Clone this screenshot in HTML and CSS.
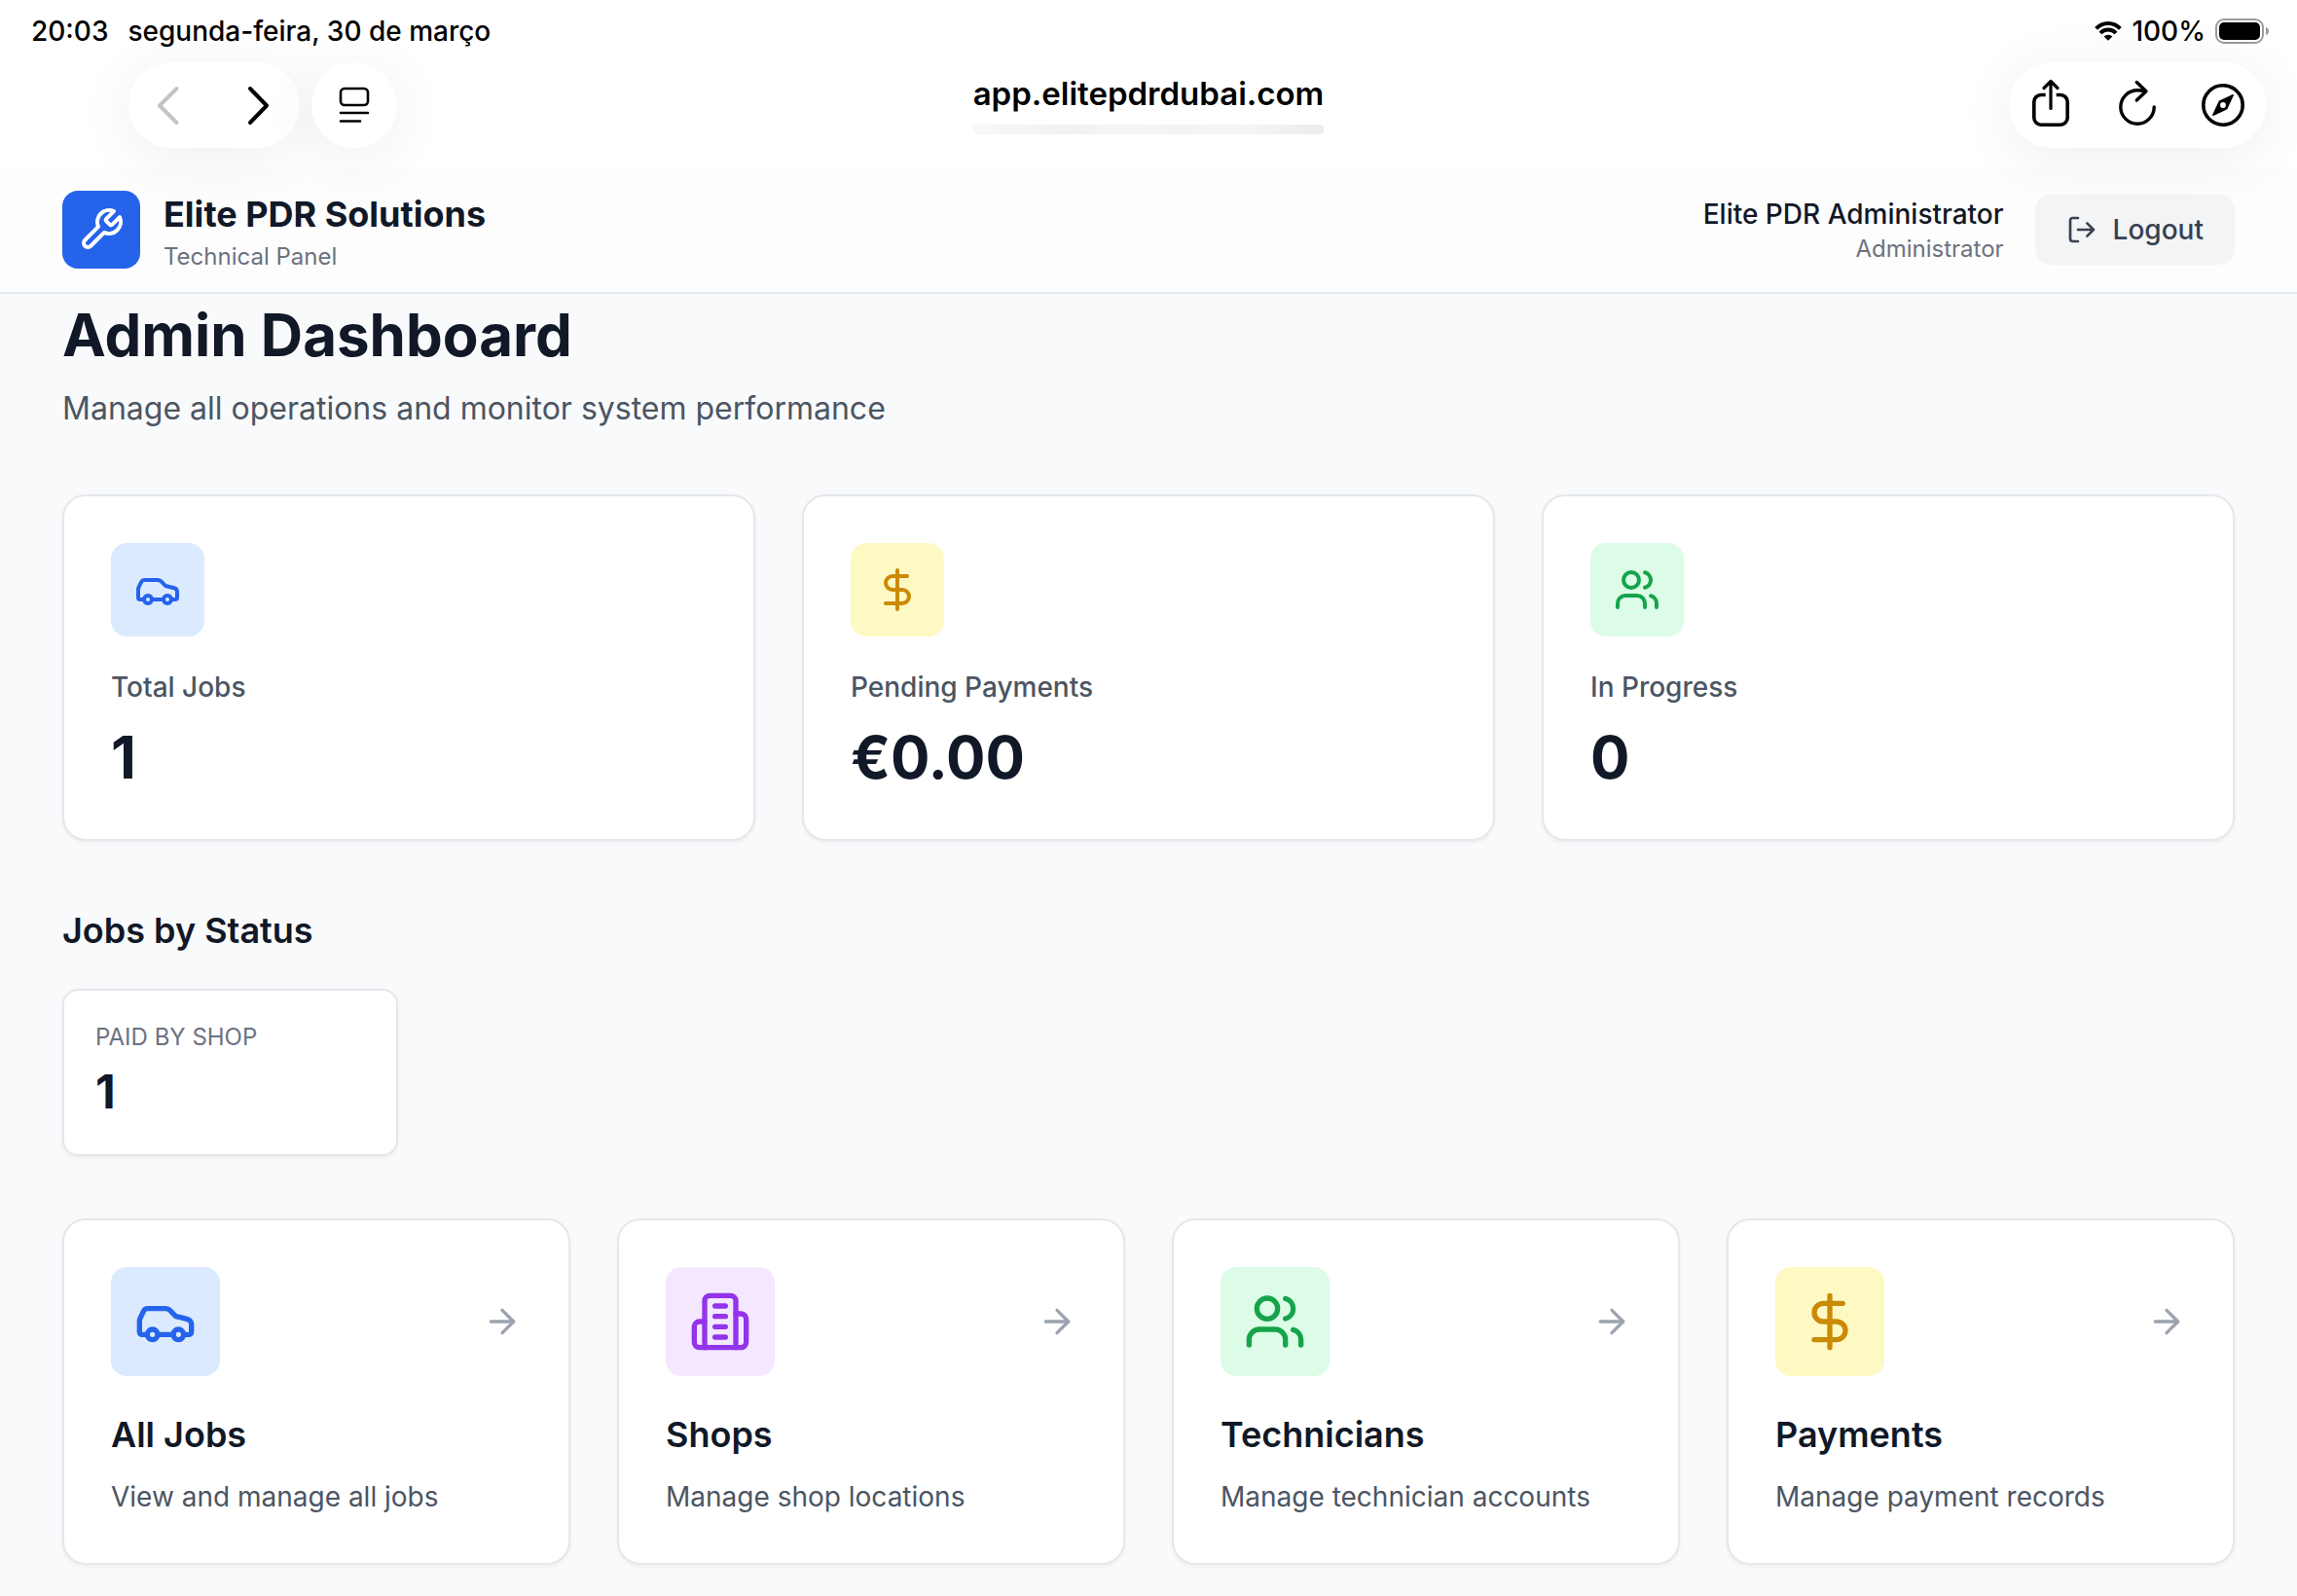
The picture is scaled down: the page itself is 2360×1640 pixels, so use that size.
FILE: index.html
```html
<!DOCTYPE html>
<html lang="en">
    <head>
        <meta charset="UTF-8">
        <meta name="viewport" content="width=device-width, initial-scale=1.0">
        <title>Elite PDR Solutions</title>
        <link rel="stylesheet" href="styles.css">
    </head>
    <body>
        <!-- Icons used more than once -->
        <svg class="sprite" aria-hidden="true">
            <symbol id="car" viewBox="0 0 24 24">
                <path d="M19 17h2c.6 0 1-.4 1-1v-3c0-.9-.7-1.7-1.5-1.9C18.7 10.6 16 10 16 10s-1.3-1.4-2.2-2.3c-.5-.4-1.1-.7-1.8-.7H5c-.6 0-1.1.4-1.4.9l-1.4 2.9A3.7 3.7 0 0 0 2 12v4c0 .6.4 1 1 1h2"/>
                <circle cx="7" cy="17" r="2"/>
                <path d="M9 17h6"/>
                <circle cx="17" cy="17" r="2"/>
            </symbol>
            <symbol id="dollar" viewBox="0 0 24 24">
                <path d="M12 2v20"/>
                <path d="M17 5H9.5a3.5 3.5 0 0 0 0 7h5a3.5 3.5 0 0 1 0 7H6"/>
            </symbol>
            <symbol id="users" viewBox="0 0 24 24">
                <path d="M16 21v-2a4 4 0 0 0-4-4H6a4 4 0 0 0-4 4v2"/>
                <circle cx="9" cy="7" r="4"/>
                <path d="M22 21v-2a4 4 0 0 0-3-3.87"/>
                <path d="M16 3.13a4 4 0 0 1 0 7.75"/>
            </symbol>
            <symbol id="arrow" viewBox="0 0 24 24">
                <path d="M5 12h14"/>
                <path d="m12 5 7 7-7 7"/>
            </symbol>
        </svg>

        <div class="browser">
            <div class="statusbar">
                <div class="status-group status-left">
                    <span>20:03</span>
                    <span lang="pt">segunda-feira, 30 de março</span>
                </div>
                <div class="status-group status-right">
                    <svg class="wifi" viewBox="0 0 28 20" aria-hidden="true">
                        <path class="wave" d="M1.6 7.4A17 17 0 0 1 26.4 7.4"/>
                        <path class="wave" d="M6 12A11 11 0 0 1 22 12"/>
                        <path d="M14 19.8l-4.4-4.3a6.2 6.2 0 0 1 8.8 0z"/>
                    </svg>
                    <span>100%</span>
                    <svg class="battery" viewBox="0 0 56 26" aria-hidden="true">
                        <rect x="1" y="1" width="48" height="24" rx="8" fill="none" stroke="#9c9c9c" stroke-width="2"/>
                        <rect x="4" y="4" width="42" height="18" rx="5"/>
                        <path d="M52 9c2 .6 3 2 3 4s-1 3.4-3 4z" fill="#9c9c9c"/>
                    </svg>
                </div>
            </div>
            <div class="toolbar">
                <div class="tools">
                    <div class="pill">
                        <button class="tool" aria-label="Back" disabled>
                            <svg viewBox="0 0 88 88"><path d="M49.5 27 32 44.5 49.5 62" stroke-width="4"/></svg>
                        </button>
                        <button class="tool" aria-label="Forward">
                            <svg viewBox="0 0 88 88"><path d="M37 27 54 44.5 37 62" stroke-width="4"/></svg>
                        </button>
                    </div>
                    <div class="pill">
                        <button class="tool" aria-label="Page menu">
                            <svg viewBox="0 0 88 88" stroke-width="2.6">
                                <rect x="30" y="27" width="28" height="17" rx="4"/>
                                <path d="M30 52h28M30 60.5h20"/>
                            </svg>
                        </button>
                    </div>
                </div>
                <button class="address">app.elitepdrdubai.com</button>
                <div class="tools tools-right">
                    <div class="pill">
                        <button class="tool" aria-label="Share">
                            <svg viewBox="0 0 88 88" stroke-width="3.6">
                                <path stroke-linecap="butt" d="M37.7 33.5H33a7.2 7.2 0 0 0-7.2 7.2V57a7.2 7.2 0 0 0 7.2 7.2h20a7.2 7.2 0 0 0 7.2-7.2V40.7a7.2 7.2 0 0 0-7.2-7.2h-4.3"/>
                                <path d="M43 20v27.5M36 26.5l7-7 7 7" stroke-width="3.2"/>
                            </svg>
                        </button>
                        <button class="tool" aria-label="Reload">
                            <svg viewBox="0 0 88 88" stroke-width="3.4">
                                <path d="M61.2 46A17.2 17.2 0 1 1 44 28.8Q48 28.8 52 29.7"/>
                                <path d="M43.3 20.5 53 29.7 43.3 39"/>
                            </svg>
                        </button>
                        <button class="tool" aria-label="Open in Safari">
                            <svg viewBox="0 0 88 88">
                                <circle cx="44" cy="44" r="20.2" stroke-width="3.6"/>
                                <path d="M54.2 33.8 47.7 47.7 33.8 54.2 40.3 40.3z" fill="#000" stroke-width="1.5"/>
                                <circle cx="44" cy="44" r="2.9" fill="#fff" stroke="none"/>
                            </svg>
                        </button>
                    </div>
                </div>
            </div>
        </div>

        <header class="header">
            <div class="logo">
                <svg class="icon" viewBox="0 0 24 24" aria-hidden="true"><path d="M14.7 6.3a1 1 0 0 0 0 1.4l1.6 1.6a1 1 0 0 0 1.4 0l3.77-3.77a6 6 0 0 1-7.94 7.94l-6.91 6.91a2.12 2.12 0 0 1-3-3l6.91-6.91a6 6 0 0 1 7.94-7.94l-3.76 3.76z"/></svg>
            </div>
            <div class="brand">
                <p class="brand-name">Elite PDR Solutions</p>
                <p class="small">Technical Panel</p>
            </div>
            <div class="user">
                <p class="user-name">Elite PDR Administrator</p>
                <p class="small">Administrator</p>
            </div>
            <button class="logout">
                <svg class="icon" viewBox="0 0 24 24" aria-hidden="true">
                    <path d="M9 21H5a2 2 0 0 1-2-2V5a2 2 0 0 1 2-2h4"/>
                    <path d="m16 17 5-5-5-5M21 12H9"/>
                </svg>
                Logout
            </button>
        </header>

        <main class="main">
            <h1>Admin Dashboard</h1>
            <p class="intro">Manage all operations and monitor system performance</p>

            <section class="stats">
                <div class="card">
                    <div class="tile blue"><svg class="icon"><use href="#car"/></svg></div>
                    <p class="stat-label">Total Jobs</p>
                    <p class="stat-value">1</p>
                </div>
                <div class="card">
                    <div class="tile yellow"><svg class="icon"><use href="#dollar"/></svg></div>
                    <p class="stat-label">Pending Payments</p>
                    <p class="stat-value">€0.00</p>
                </div>
                <div class="card">
                    <div class="tile green"><svg class="icon"><use href="#users"/></svg></div>
                    <p class="stat-label">In Progress</p>
                    <p class="stat-value">0</p>
                </div>
            </section>

            <h2>Jobs by Status</h2>
            <section class="statuses">
                <div class="card status">
                    <p class="small">PAID BY SHOP</p>
                    <p class="status-value">1</p>
                </div>
            </section>

            <nav class="links">
                <a class="card" href="#jobs">
                    <div class="link-top">
                        <div class="tile large blue"><svg class="icon"><use href="#car"/></svg></div>
                        <svg class="icon arrow"><use href="#arrow"/></svg>
                    </div>
                    <h3>All Jobs</h3>
                    <p class="link-text">View and manage all jobs</p>
                </a>
                <a class="card" href="#shops">
                    <div class="link-top">
                        <div class="tile large purple">
                            <svg class="icon" viewBox="0 0 24 24">
                                <path d="M6 22V4a2 2 0 0 1 2-2h8a2 2 0 0 1 2 2v18Z"/>
                                <path d="M6 12H4a2 2 0 0 0-2 2v6a2 2 0 0 0 2 2h2"/>
                                <path d="M18 9h2a2 2 0 0 1 2 2v9a2 2 0 0 1-2 2h-2"/>
                                <path d="M10 6h4M10 10h4M10 14h4M10 18h4"/>
                            </svg>
                        </div>
                        <svg class="icon arrow"><use href="#arrow"/></svg>
                    </div>
                    <h3>Shops</h3>
                    <p class="link-text">Manage shop locations</p>
                </a>
                <a class="card" href="#technicians">
                    <div class="link-top">
                        <div class="tile large green"><svg class="icon"><use href="#users"/></svg></div>
                        <svg class="icon arrow"><use href="#arrow"/></svg>
                    </div>
                    <h3>Technicians</h3>
                    <p class="link-text">Manage technician accounts</p>
                </a>
                <a class="card" href="#payments">
                    <div class="link-top">
                        <div class="tile large yellow"><svg class="icon"><use href="#dollar"/></svg></div>
                        <svg class="icon arrow"><use href="#arrow"/></svg>
                    </div>
                    <h3>Payments</h3>
                    <p class="link-text">Manage payment records</p>
                </a>
            </nav>
        </main>
    </body>
</html>
```
FILE: styles.css
```css
* {
    box-sizing: border-box;
}

body {
    margin: 0;
    font-family: Inter, "Liberation Sans", sans-serif;
    font-size: 28px;
    line-height: 40px;
    color: #111827;
    background: #f9fafb;
}

h1, h2, h3, p {
    margin: 0;
}

button {
    font: inherit;
    color: inherit;
    border: none;
    background: none;
    padding: 0;
    cursor: pointer;
}

a {
    color: inherit;
    text-decoration: none;
}

.sprite {
    display: none;
}

.icon {
    display: block;
    width: 48px;
    height: 48px;
    flex: none;
    fill: none;
    stroke: currentColor;
    stroke-width: 2;
    stroke-linecap: round;
    stroke-linejoin: round;
}

/* Browser bar */
.browser {
    position: relative; /* shadows fall on the header */
    z-index: 1;
    background: white;
    color: black;
    padding-bottom: 20px;
}

.statusbar {
    display: flex;
    justify-content: space-between;
    height: 64px;
    padding: 12px 28px 12px 32px;
    font-weight: 500;
}

.status-group {
    display: flex;
    align-items: center;
}

.status-left {
    gap: 20px;
}

.status-right {
    gap: 10px;
}

.wifi {
    width: 28px;
    height: 20px;
}

.wave {
    fill: none;
    stroke: black;
    stroke-width: 4;
}

.battery {
    width: 56px;
    height: 26px;
}

.toolbar {
    display: grid;
    grid-template-columns: 1fr auto 1fr;
    padding: 0 32px;
}

.tools {
    display: flex;
    gap: 12px;
    padding-left: 100px;
}

.tools-right {
    justify-content: flex-end;
    padding-left: 0;
}

.pill {
    display: flex;
    border-radius: 44px;
    background: white;
    box-shadow: 0 8px 60px rgba(0, 0, 0, 0.07);
}

.tool {
    width: 88px;
    height: 88px;
}

.tool svg {
    display: block;
    width: 88px;
    height: 88px;
    fill: none;
    stroke: black;
    stroke-linecap: round;
    stroke-linejoin: round;
}

.tool:disabled svg {
    stroke: #c4c4c6;
}

.address {
    align-self: start;
    padding-top: 12px;
    font-size: 33px;
    font-weight: 600;
}

/* Loading bar under the address */
.address::after {
    content: "";
    display: block;
    height: 10px;
    margin-top: 12px;
    border-radius: 4px;
    background: linear-gradient(to right, #f8f8f8, #f1f1f1 30%, #f6f6f6 40%, #f3f3f3 60%, #f6f6f6 75%, #ececec);
}

/* Header */
.header {
    display: flex;
    align-items: center;
    height: 130px;
    padding: 0 64px;
    background: #fdfdfd;
    border-bottom: 2px solid #e2e8f0;
}

.logo {
    padding: 16px;
    border-radius: 16px;
    background: #2563eb;
    color: white;
}

.brand {
    margin-left: 24px;
}

.brand-name {
    font-size: 36px;
    line-height: 56px;
    font-weight: 700;
}

.small {
    font-size: 24px;
    line-height: 32px;
    color: #6b7280;
}

.user {
    margin-left: auto;
    text-align: right;
}

.user-name {
    font-weight: 500;
}

.logout {
    display: flex;
    align-items: center;
    gap: 16px;
    margin-left: 32px;
    padding: 16px 32px;
    border-radius: 16px;
    background: #f3f4f6;
    color: #374151;
    font-weight: 500;
}

.logout .icon {
    width: 32px;
    height: 32px;
}

/* Dashboard */
.main {
    padding: 6px 64px 32px;
}

h1 {
    font-size: 60px;
    line-height: 72px;
    font-weight: 700;
}

.intro {
    margin: 16px 0 64px;
    font-size: 32px;
    line-height: 48px;
    color: #4b5563;
}

.card {
    display: block;
    padding: 48px;
    border: 2px solid #e5e7eb;
    border-radius: 24px;
    background: white;
    box-shadow: 0 2px 4px rgba(0, 0, 0, 0.05);
}

.stats {
    display: grid;
    grid-template-columns: repeat(3, 1fr);
    gap: 48px;
}

.tile {
    width: fit-content;
    padding: 24px;
    border-radius: 16px;
}

.large .icon {
    width: 64px;
    height: 64px;
}

.blue {
    background: #dbeafe;
    color: #2563eb;
}

.yellow {
    background: #fef9c3;
    color: #ca8a04;
}

.green {
    background: #dcfce7;
    color: #16a34a;
}

.purple {
    background: #f3e8ff;
    color: #9333ea;
}

.stat-label {
    margin: 32px 0 16px;
    font-weight: 500;
    color: #4b5563;
}

.stat-value {
    font-size: 60px;
    line-height: 72px;
    font-weight: 700;
}

h2, h3 {
    font-size: 36px;
    line-height: 56px;
    font-weight: 600;
}

h2 {
    margin: 64px 0 32px;
}

.statuses {
    display: grid;
    grid-template-columns: repeat(6, 1fr);
    gap: 32px;
}

.status {
    padding: 32px;
    border-radius: 16px;
}

.status-value {
    margin-top: 8px;
    font-size: 48px;
    line-height: 64px;
    font-weight: 700;
}

.links {
    display: grid;
    grid-template-columns: repeat(4, 1fr);
    gap: 48px;
    margin-top: 64px;
}

.link-top {
    display: flex;
    align-items: center;
    justify-content: space-between;
    margin-bottom: 32px;
}

.arrow {
    width: 40px;
    height: 40px;
    color: #9ca3af;
}

.link-text {
    margin-top: 16px;
    color: #4b5563;
}
```
